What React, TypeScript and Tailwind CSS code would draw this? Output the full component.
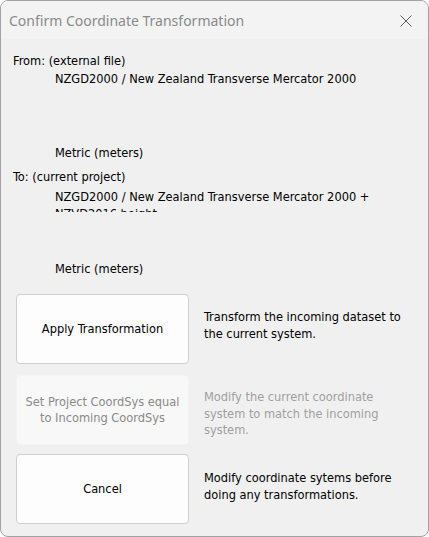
import React from 'react';

const body = { fontFamily: '"DejaVu Sans Condensed", "DejaVu Sans", sans-serif' };

const ACTIONS = [
  { label: ['Apply Transformation'], desc: ['Transform the incoming dataset to', 'the current system.'], disabled: false, gap: 'mt-[16px]', pad: 'pt-[15px]' },
  { label: ['Set Project CoordSys equal', 'to Incoming CoordSys'], desc: ['Modify the current coordinate', 'system to match the incoming', 'system.'], disabled: true, gap: 'mt-[11px]', pad: 'pt-[14px]' },
  { label: ['Cancel'], desc: ['Modify coordinate sytems before', 'doing any transformations.'], disabled: false, gap: 'mt-[9px]', pad: 'pt-[16px]' },
];

export default function App() {
  return (
    <div className="w-[429px] h-[537px] bg-white">
      <div className="w-[429px] h-[537px] rounded-[8px] border border-[#a3a3a3] bg-[#f0f0f0] overflow-hidden flex flex-col">
        <div className="h-[38px] shrink-0 flex items-center justify-between pl-[8px] pr-[16px] bg-[#f3f3f3]">
          <span className="text-[14px] text-[#8a8a8a]" style={{ fontFamily: '"Noto Sans", "Open Sans", sans-serif' }}>
            Confirm Coordinate Transformation
          </span>
          <svg width="12" height="12" viewBox="0 0 12 12" className="mt-[1px]">
            <path d="M0.5 0.5 L11.5 11.5 M11.5 0.5 L0.5 11.5" stroke="#5c5c5c" strokeWidth="1" fill="none" />
          </svg>
        </div>
        <div className="pl-[12px] pt-[13px] text-[12.7px] text-black" style={body}>
          <div className="leading-[18px]">From: (external file)</div>
          <div className="pl-[42px] leading-[18px] h-[74px]">NZGD2000 / New Zealand Transverse Mercator 2000</div>
          <div className="pl-[42px] leading-[18px]">Metric (meters)</div>
          <div className="leading-[18px] mt-[6px]">To: (current project)</div>
          <div className="pl-[42px] leading-[17px] h-[26px] overflow-hidden w-[390px] pt-[2px]">
            NZGD2000 / New Zealand Transverse Mercator 2000 + NZVD2016 height
          </div>
          <div className="pl-[42px] leading-[18px] mt-[48px]">Metric (meters)</div>
          {ACTIONS.map((a) => (
            <div key={a.label[0]} className={`flex ${a.gap}`}>
              <div
                className={`ml-[3px] w-[173px] h-[70px] shrink-0 rounded-[4px] flex flex-col items-center justify-center text-center leading-[16px] ${
                  a.disabled ? 'bg-[#f8f8f8] text-[#8a8a8a] border border-[#f3f3f3]' : 'bg-[#fdfdfd] text-black border border-[#d0d0d0]'
                }`}
              >
                {a.label.map((l) => (
                  <div key={l}>{l}</div>
                ))}
              </div>
              <div className={`pl-[15px] ${a.pad} leading-[16.5px] whitespace-nowrap ${a.disabled ? 'text-[#a0a0a0]' : 'text-black'}`}>
                {a.desc.map((d) => (
                  <div key={d}>{d}</div>
                ))}
              </div>
            </div>
          ))}
        </div>
      </div>
    </div>
  );
}
